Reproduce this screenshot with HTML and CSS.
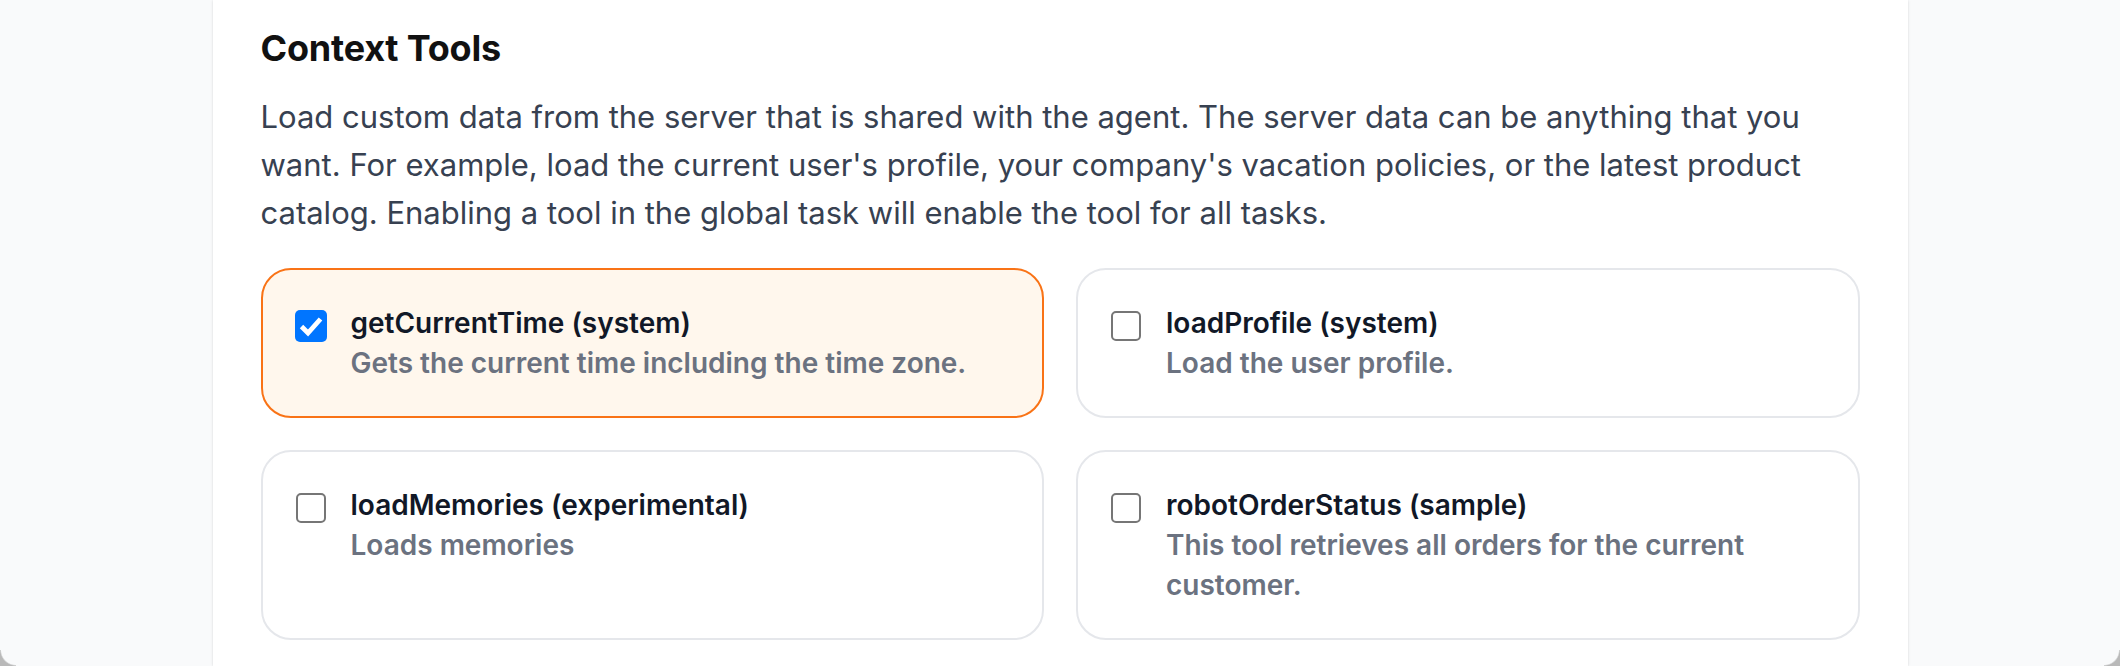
FILE: index.html
```html
<!DOCTYPE html>
<html lang="en">
<head>
<meta charset="utf-8">
<title>Context Tools</title>
<link rel="stylesheet" href="styles.css">
</head>
<body>
<main class="panel">
  <h2 class="heading">Context Tools</h2>
  <p class="intro">Load custom data from the server that is shared with the agent. The server data can be anything that you want. For example, load the current user's profile, your company's vacation policies, or the latest product catalog. Enabling a tool in the global task will enable the tool for all tasks.</p>
  <div class="tools">
    <label class="tool tool-on">
      <span class="cb cb-on"><svg viewBox="0 0 32 32" width="32" height="32"><path d="M6.5 16.5 L13 23 L25.5 9" fill="none" stroke="#fff" stroke-width="4.8" stroke-linejoin="miter"/></svg></span>
      <span class="tool-text">
        <span class="tool-name">getCurrentTime (system)</span>
        <span class="tool-desc">Gets the current time including the time zone.</span>
      </span>
    </label>
    <label class="tool">
      <span class="cb cb-off"></span>
      <span class="tool-text">
        <span class="tool-name">loadProfile (system)</span>
        <span class="tool-desc">Load the user profile.</span>
      </span>
    </label>
    <label class="tool">
      <span class="cb cb-off"></span>
      <span class="tool-text">
        <span class="tool-name">loadMemories (experimental)</span>
        <span class="tool-desc">Loads memories</span>
      </span>
    </label>
    <label class="tool">
      <span class="cb cb-off"></span>
      <span class="tool-text">
        <span class="tool-name">robotOrderStatus (sample)</span>
        <span class="tool-desc">This tool retrieves all orders for the current customer.</span>
      </span>
    </label>
  </div>
</main>
<div class="corner corner-left"></div>
<div class="corner corner-right"></div>
</body>
</html>
```
FILE: styles.css
```css
html, body {
  margin: 0;
  padding: 0;
  height: 666px;
  overflow: hidden;
}
body {
  background: #f9fafb;
  font-family: Inter, "Noto Sans", sans-serif;
  position: relative;
}
.panel {
  width: 1695px;
  height: 666px;
  box-sizing: border-box;
  margin: 0 auto;
  padding: 20px 48px 0;
  background: #ffffff;
  box-shadow: 0 0 3px rgba(0, 0, 0, 0.10), 0 1px 2px rgba(0, 0, 0, 0.05);
}
.heading {
  margin: 0;
  font-size: 36px;
  line-height: 56px;
  font-weight: 700;
  color: #111111;
  letter-spacing: -0.2px;
}
.intro {
  margin: 17px 0 0;
  font-size: 31px;
  line-height: 48px;
  font-weight: 400;
  color: #374151;
  letter-spacing: 0;
}
.tools {
  margin-top: 31px;
  display: grid;
  grid-template-columns: 1fr 1fr;
  gap: 32px;
}
.tool {
  display: flex;
  align-items: flex-start;
  gap: 24px;
  padding: 33px 32px;
  border: 2px solid #e5e7eb;
  border-radius: 30px;
  background: #ffffff;
}
.tool-on {
  border-color: #f97316;
  background: #fff7ed;
}
.cb {
  flex: none;
  box-sizing: border-box;
  margin-top: 7px;
  width: 32px;
  height: 32px;
  border-radius: 5px;
}
.cb svg {
  display: block;
}
.cb-on {
  background: #0075ff;
}
.cb-off {
  width: 30px;
  height: 30px;
  margin: 8px 1px 0;
  border: 2px solid #767676;
  border-radius: 5px;
  background: #ffffff;
}
.tool-text {
  display: flex;
  flex-direction: column;
}
.tool-name {
  font-size: 28px;
  line-height: 40px;
  font-weight: 600;
  color: #111827;
}
.tool-desc {
  font-size: 28px;
  line-height: 40px;
  font-weight: 600;
  color: #6b7280;
}
.corner {
  position: fixed;
  bottom: 0;
  width: 16px;
  height: 16px;
}
.corner-left {
  left: 0;
  background: radial-gradient(circle at 16px 0, transparent 14.5px, #b9b9b9 16px);
}
.corner-right {
  right: 0;
  background: radial-gradient(circle at 0 0, transparent 14.5px, #b9b9b9 16px);
}
```
